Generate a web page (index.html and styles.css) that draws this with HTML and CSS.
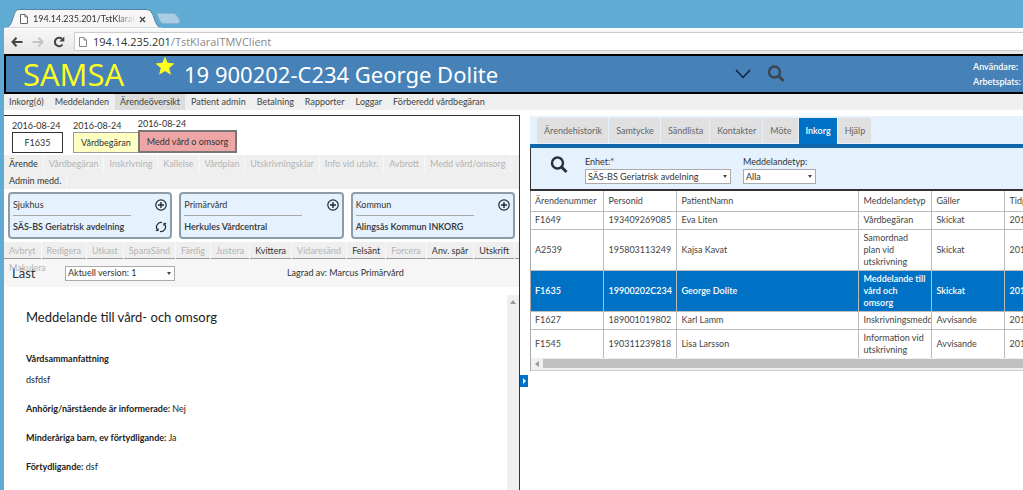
FILE: index.html
```html
<!DOCTYPE html>
<html lang="sv">
<head>
    <meta charset="UTF-8">
    <meta name="viewport" content="width=device-width, initial-scale=1.0">
    <title>SAMSA</title>
    <link rel="stylesheet" href="styles.css">
</head>
<body>
    <div class="browser">
        <div class="tab-strip">
            <svg class="tab-shape" viewBox="0 0 178 19" width="178" height="19">
                <path d="M152 4.500H169Q171 4.500 172 7L175 12Q175 14.500 172 14.500H159Q156 14.500 155 12Z" fill="#a9cde2" stroke="#86b4ce"/>
                <path d="M0 19C5 18 6 15 8 9Q10 .5 14 .5H142Q146 .5 148 6C151 15 152 18 157 19Z" fill="#f6f6f6" stroke="#5585a0"/>
                <path d="M0 18.500H157V19H0Z" fill="#f6f6f6"/>
            </svg>
            <div class="tab">
                <svg class="page-icon" viewBox="0 0 8 10" width="8" height="10"><path d="M.5.5H5L7.500 3V9.500H.5ZM5 .5V3H7.500" fill="#fff" stroke="#666"/></svg>
                <span class="tab-title">194.14.235.201/TstKlaraIT</span>
                <button class="tab-close" aria-label="Stäng flik"><svg viewBox="0 0 7 7" width="7" height="7"><path d="M1 1L6 6M6 1L1 6" stroke="#444" stroke-width="1.300"/></svg></button>
            </div>
        </div>
        <div class="address-bar">
            <button aria-label="Bakåt"><svg viewBox="0 0 12 10" width="12" height="10"><path d="M5.500 .8L1.500 5L5.500 9.200M1.500 5H11.500" fill="none" stroke="#444" stroke-width="2"/></svg></button>
            <button aria-label="Framåt"><svg viewBox="0 0 12 10" width="12" height="10"><path d="M6.500 .8L10.500 5L6.500 9.200M.5 5H10.500" fill="none" stroke="#c4c4c4" stroke-width="2"/></svg></button>
            <button aria-label="Läs om"><svg viewBox="0 0 12 12" width="12" height="12"><path d="M9.500 8.500A4.200 4.200 0 1 1 9 3" fill="none" stroke="#444" stroke-width="2"/><path d="M11.300 .5V5.400H6.400Z" fill="#444"/></svg></button>
            <div class="url">
                <svg class="page-icon" viewBox="0 0 8 10" width="8" height="10"><path d="M.5.5H5L7.500 3V9.500H.5ZM5 .5V3H7.500" fill="#fff" stroke="#888"/></svg>
                <span><b>194.14.235.201</b>/TstKlaraITMVClient</span>
            </div>
        </div>
    </div>

    <div class="page">
        <header class="header">
            <div class="logo">SAMSA</div>
            <svg class="star" viewBox="0 0 20 20" width="20" height="20"><path d="M10 .5L12.600 6.800L19.500 7.400L14.200 11.900L15.900 18.800L10 15.100L4.100 18.800L5.800 11.900L.5 7.400L7.400 6.800Z" fill="#ffff1e"/></svg>
            <h1>19 900202-C234 George Dolite</h1>
            <div class="header-tools">
                <button aria-label="Visa mer"><svg viewBox="0 0 16 10" width="16" height="10"><path d="M1 1L8 8.500L15 1" fill="none" stroke="#10203c" stroke-width="1.500"/></svg></button>
                <button aria-label="Sök patient"><svg viewBox="0 0 18 18" width="18" height="18"><circle cx="7.500" cy="7" r="5.500" fill="none" stroke="#3b4652" stroke-width="2.400"/><path d="M11.500 11L16.500 16" stroke="#3b4652" stroke-width="3"/></svg></button>
            </div>
            <div class="user-info">
                <div>Användare:</div>
                <div>Arbetsplats:</div>
            </div>
        </header>

        <nav class="menu">
            <a href="#">Inkorg(6)</a>
            <a href="#">Meddelanden</a>
            <a href="#" class="active">Ärendeöversikt</a>
            <a href="#">Patient admin</a>
            <a href="#">Betalning</a>
            <a href="#">Rapporter</a>
            <a href="#">Loggar</a>
            <a href="#">Förberedd vårdbegäran</a>
        </nav>

        <div class="columns">
            <section class="case">
                <div class="timeline">
                    <div class="event first"><time>2016-08-24</time><button>F1635</button></div>
                    <div class="event request"><time>2016-08-24</time><button>Vårdbegäran</button></div>
                    <div class="event care"><time>2016-08-24</time><button>Medd vård o omsorg</button></div>
                </div>

                <div class="steps">
                    <button>Ärende</button>
                    <button disabled>Vårdbegäran</button>
                    <button disabled>Inskrivning</button>
                    <button disabled>Kallelse</button>
                    <button disabled>Vårdplan</button>
                    <button disabled>Utskrivningsklar</button>
                    <button disabled>Info vid utskr.</button>
                    <button disabled>Avbrott</button>
                    <button disabled>Medd vård/omsorg</button>
                    <button>Admin medd.</button>
                </div>

                <div class="units">
                    <div class="unit">
                        <div class="unit-text"><div class="unit-type">Sjukhus</div><div class="unit-name">SÄS-BS Geriatrisk avdelning</div></div>
                        <div class="unit-icons">
                            <button aria-label="Lägg till sjukhus"><svg viewBox="0 0 12 12" width="12" height="12"><path d="M6 3V9M3 6H9" stroke="#1c2733" stroke-width="1.400"/><circle cx="6" cy="6" r="5.200" fill="none" stroke="#1c2733" stroke-width="1.200"/></svg></button>
                            <button aria-label="Byt sjukhus"><svg viewBox="0 0 12 12" width="12" height="12"><path d="M7 1.500A4.600 4.600 0 0 0 2.600 9M5 10.500A4.600 4.600 0 0 0 9.400 3" fill="none" stroke="#1c2733" stroke-width="1.200"/><path d="M.8 9.600H3.200V7.400M11.200 2.400H8.800V4.600" fill="none" stroke="#1c2733"/></svg></button>
                        </div>
                    </div>
                    <div class="unit">
                        <div class="unit-text"><div class="unit-type">Primärvård</div><div class="unit-name">Herkules Vårdcentral</div></div>
                        <div class="unit-icons">
                            <button aria-label="Lägg till primärvård"><svg viewBox="0 0 12 12" width="12" height="12"><path d="M6 3V9M3 6H9" stroke="#1c2733" stroke-width="1.400"/><circle cx="6" cy="6" r="5.200" fill="none" stroke="#1c2733" stroke-width="1.200"/></svg></button>
                        </div>
                    </div>
                    <div class="unit">
                        <div class="unit-text"><div class="unit-type">Kommun</div><div class="unit-name">Alingsås Kommun INKORG</div></div>
                        <div class="unit-icons">
                            <button aria-label="Lägg till kommun"><svg viewBox="0 0 12 12" width="12" height="12"><path d="M6 3V9M3 6H9" stroke="#1c2733" stroke-width="1.400"/><circle cx="6" cy="6" r="5.200" fill="none" stroke="#1c2733" stroke-width="1.200"/></svg></button>
                        </div>
                    </div>
                </div>

                <div class="actions">
                    <button disabled>Avbryt</button>
                    <button disabled>Redigera</button>
                    <button disabled>Utkast</button>
                    <button disabled>SparaSänd</button>
                    <button disabled>Färdig</button>
                    <button disabled>Justera</button>
                    <button>Kvittera</button>
                    <button disabled>Vidaresänd</button>
                    <button>Felsänt</button>
                    <button disabled>Forcera</button>
                    <button>Anv. spår</button>
                    <button>Utskrift</button>
                    <button disabled>Makulera</button>
                </div>

                <div class="version-bar">
                    <span class="status">Läst</span>
                    <div class="select version">
                        <select aria-label="Version"><option>Aktuell version: 1</option></select>
                    </div>
                    <span>Lagrad av: Marcus Primärvård</span>
                </div>

                <div class="document">
                    <article>
                        <h2>Meddelande till vård- och omsorg</h2>
                        <h3>Vårdsammanfattning</h3>
                        <p>dsfdsf</p>
                        <p><b>Anhörig/närstående är informerade:</b> Nej</p>
                        <p><b>Minderåriga barn, ev förtydligande:</b> Ja</p>
                        <p><b>Förtydligande:</b> dsf</p>
                    </article>
                    <div class="scroll-v"><svg viewBox="0 0 6 4" width="6" height="4"><path d="M0 4L3 0L6 4Z" fill="#999"/></svg></div>
                </div>
            </section>

            <div class="splitter">
                <button aria-label="Fäll ut"><svg viewBox="0 0 3 6" width="3" height="6"><path d="M0 0L3 3L0 6Z" fill="#fff"/></svg></button>
            </div>

            <section class="inbox">
                <div class="tabs">
                    <button>Ärendehistorik</button>
                    <button>Samtycke</button>
                    <button>Sändlista</button>
                    <button>Kontakter</button>
                    <button>Möte</button>
                    <button class="active">Inkorg</button>
                    <button>Hjälp</button>
                </div>

                <form class="filter">
                    <button type="button" aria-label="Sök"><svg viewBox="0 0 18 18" width="18" height="18"><circle cx="7.500" cy="7" r="5.500" fill="none" stroke="#2b3036" stroke-width="2.400"/><path d="M11.500 11L16.500 16" stroke="#2b3036" stroke-width="3"/></svg></button>
                    <div class="field unit-field">
                        <label for="enhet">Enhet:*</label>
                        <div class="select"><select id="enhet"><option>SÄS-BS Geriatrisk avdelning</option></select></div>
                    </div>
                    <div class="field type-field">
                        <label for="typ">Meddelandetyp:</label>
                        <div class="select"><select id="typ"><option>Alla</option></select></div>
                    </div>
                </form>

                <div class="grid">
                    <table>
                        <colgroup><col><col><col class="wide"><col><col><col></colgroup>
                        <thead>
                            <tr><th>Ärendenummer</th><th>Personid</th><th>PatientNamn</th><th>Meddelandetyp</th><th>Gäller</th><th>Tidp</th></tr>
                        </thead>
                        <tbody>
                            <tr><td>F1649</td><td>193409269085</td><td>Eva Liten</td><td>Vårdbegäran</td><td>Skickat</td><td>201</td></tr>
                            <tr><td>A2539</td><td>195803113249</td><td>Kajsa Kavat</td><td>Samordnad plan vid utskrivning</td><td>Skickat</td><td>201</td></tr>
                            <tr class="selected"><td>F1635</td><td>19900202C234</td><td>George Dolite</td><td>Meddelande till vård och omsorg</td><td>Skickat</td><td>201</td></tr>
                            <tr><td>F1627</td><td>189001019802</td><td>Karl Lamm</td><td>Inskrivningsmedd</td><td>Avvisande</td><td>201</td></tr>
                            <tr><td>F1545</td><td>190311239818</td><td>Lisa Larsson</td><td>Information vid utskrivning</td><td>Avvisande</td><td>201</td></tr>
                        </tbody>
                    </table>
                    <div class="scroll-h">
                        <svg viewBox="0 0 4 6" width="4" height="6"><path d="M4 0L0 3L4 6Z" fill="#999"/></svg>
                        <div class="thumb"></div>
                    </div>
                </div>
            </section>
        </div>
    </div>
</body>
</html>
```
FILE: styles.css
```css
:root {
    --sky: #60abd3;
    --header-blue: #4682b7;
    --accent: #0072c6;
    --pale-blue: #e5f1fd;
    --bar-gray: #efefef;
    --line-gray: #aaa;
    --text-color: #333;
}

* {
    margin: 0;
    padding: 0;
    box-sizing: border-box;
}

body {
    display: flex;
    flex-direction: column;
    height: 100vh;
    padding-left: 4px;
    overflow: hidden;
    background: var(--sky);
    color: var(--text-color);
    font-family: Lato, "Open Sans", sans-serif;
    font-size: 9px;
    line-height: 12px;
}

button,
select {
    font: inherit;
    color: inherit;
    background: none;
    border: none;
}

svg {
    display: block;
}

/* browser chrome */
.tab-strip {
    position: relative;
    height: 28px;
    padding: 10px 0 0 16px;
}

.tab-shape {
    position: absolute;
    left: 1px;
    bottom: 0;
}

.tab {
    position: relative;
    display: flex;
    align-items: center;
    width: 126px;
    height: 18px;
}

.tab-title {
    flex: 1;
    margin: 0 3px 0 5px;
    overflow: hidden;
    white-space: nowrap;
    -webkit-mask-image: linear-gradient(to right, #000 80%, transparent);
    mask-image: linear-gradient(to right, #000 80%, transparent);
}

.address-bar {
    display: flex;
    align-items: center;
    gap: 9px;
    height: 26px;
    padding-left: 7px;
    background: linear-gradient(#f8f8f8, #e6e6e6);
    border-top: 1px solid #fff;
}

.url {
    flex: 1;
    display: flex;
    align-items: center;
    gap: 6px;
    height: 19px;
    padding-left: 4px;
    background: #fff;
    border: 1px solid #ccc;
    border-right: none;
    color: #888;
    font-family: "Open Sans", sans-serif;
    font-size: 11px;
}

.url b {
    color: #333;
    font-weight: normal;
}

/* application */
.page {
    flex: 1;
    display: flex;
    flex-direction: column;
    min-height: 0;
    background: #fff;
}

.header {
    display: flex;
    align-items: center;
    height: 40px;
    padding-left: 17px;
    background: var(--header-blue);
    border: 2px solid #000;
    border-right: none;
    color: #fff;
}

.logo {
    width: 132px;
    color: #ffff1e;
    font-family: "Open Sans", sans-serif;
    font-size: 31px;
    line-height: 36px;
}

.star {
    align-self: flex-start;
}

.header h1 {
    flex: 1;
    margin-left: 9px;
    font-family: "Noto Sans", sans-serif;
    font-size: 22px;
    font-weight: normal;
    line-height: 32px;
    white-space: nowrap;
}

.header-tools {
    display: flex;
    align-items: center;
    gap: 16px;
    margin-right: 188px;
}

.user-info {
    width: 50px;
    line-height: 15px;
    font-weight: 600;
}

.menu {
    display: flex;
    gap: 1px;
    height: 16px;
    background: var(--bar-gray);
}

.menu a {
    padding: 2px 5px;
    color: #444;
    text-decoration: none;
    white-space: nowrap;
}

.menu .active {
    background: #dcdcdc;
}

.columns {
    flex: 1;
    display: grid;
    grid-template-columns: minmax(0, 516fr) 10px minmax(0, 493fr);
    min-height: 0;
    padding-top: 5px;
}

.case {
    display: flex;
    flex-direction: column;
    min-height: 0;
    border-top: 1px solid #333;
    border-right: 1px solid #333;
}

.timeline {
    display: flex;
    align-items: flex-end;
    padding: 2px 8px;
}

.event time {
    display: block;
}

.event button {
    display: block;
    height: 21px;
    padding: 0 7px;
    border: 1px solid #333;
}

.first {
    margin-right: 10px;
}

.first button {
    width: 51px;
}

.request button {
    background: #ffffc4;
    border-color: #999;
    border-right: none;
}

.care button {
    height: 23px;
    background: #eda5a5;
    border: 2px solid #777;
}

.steps {
    display: flex;
    flex-wrap: wrap;
    background: var(--bar-gray);
}

.steps button,
.actions button {
    height: 17px;
    padding: 0 5px;
    border-right: 1px solid #f8f8f8;
    white-space: nowrap;
}

.steps button:disabled,
.actions button:disabled {
    color: #b4b4b4;
}

.units {
    display: grid;
    grid-template-columns: repeat(3, 1fr);
    gap: 7px;
    padding: 3px 4px;
}

.unit {
    display: flex;
    justify-content: space-between;
    height: 47px;
    padding: 5px 3px;
    background: var(--pale-blue);
    border: 2px solid #8d9da8;
    border-radius: 4px;
}

.unit-text {
    width: 118px;
    white-space: nowrap;
}

.unit-type {
    padding-bottom: 4px;
    border-bottom: 1px solid var(--line-gray);
}

.unit-name {
    padding-top: 5px;
    font-weight: 600;
}

.unit-icons {
    display: flex;
    flex-direction: column;
    gap: 10px;
}

/* buttons that do not fit wrap down over the version bar */
.actions {
    position: relative;
    z-index: 1;
    display: flex;
    flex-wrap: wrap;
    height: 17px;
    background: var(--bar-gray);
    border-bottom: 1px solid #999;
}

.version-bar {
    display: flex;
    align-items: center;
    height: 28px;
    padding-left: 8px;
    background: #f6f6f6;
}

.status {
    width: 53px;
    font-size: 13px;
}

.select {
    position: relative;
    background: #fff;
    border: 1px solid var(--line-gray);
}

.select::after {
    content: "";
    position: absolute;
    top: 5px;
    right: 3px;
    border: 2px solid transparent;
    border-top: 3px solid #444;
    pointer-events: none;
}

.select select {
    display: block;
    width: 100%;
    height: 13px;
    padding-left: 2px;
    appearance: none;
    outline: none;
}

.version {
    width: 110px;
    margin-right: 112px;
}

.document {
    flex: 1;
    display: flex;
    justify-content: space-between;
    min-height: 0;
    padding-top: 8px;
}

article {
    padding: 12px 22px;
    color: #222;
}

article h2 {
    margin-bottom: 26px;
    font-size: 13px;
    font-weight: normal;
    line-height: 20px;
}

article h3 {
    margin-bottom: 9px;
    font-size: 9px;
}

article p {
    margin-bottom: 17px;
}

.scroll-v {
    width: 12px;
    padding: 5px 3px;
    background: #f0f0f0;
}

.splitter button {
    display: flex;
    align-items: center;
    justify-content: center;
    width: 8px;
    height: 12px;
    margin-top: 260px;
    background: var(--accent);
}

.tabs {
    display: flex;
    align-items: flex-start;
    gap: 1px;
    height: 32px;
    margin-top: 1px;
    padding: 2px 0 0 7px;
    background: var(--pale-blue);
    border-bottom: 4px solid #0f68ae;
}

.tabs button {
    height: 25px;
    padding: 0 6px 0 7px;
    background: #e0e0e0;
    color: #666;
}

.tabs .active {
    height: 26px;
    background: var(--accent);
    color: #fff;
    font-weight: 600;
}

.filter {
    display: flex;
    align-items: flex-start;
    height: 43px;
    padding: 8px 0 0 19px;
    background: var(--pale-blue);
    border-left: 1px solid #333;
    border-bottom: 2px solid #333;
}

.filter button {
    margin-right: 17px;
}

.field label {
    display: block;
    margin-bottom: 1px;
}

.unit-field {
    width: 146px;
    margin-right: 12px;
}

.type-field {
    width: 73px;
}

.grid {
    overflow: hidden;
    border-left: 1px solid var(--line-gray);
    border-bottom: 1px solid #ccc;
}

table {
    width: 546px;
    margin-left: -1px;
    table-layout: fixed;
    border-collapse: collapse;
}

col {
    width: 73px;
}

.wide {
    width: 182px;
}

th,
td {
    height: 18px;
    padding: 2px 5px;
    border-right: 1px solid #bbb;
    border-bottom: 1px solid #bbb;
    overflow: hidden;
    font-weight: normal;
    text-align: left;
    color: #444;
}

th {
    height: 20px;
}

tbody tr:last-child td {
    border-bottom: none;
}

.selected td {
    background: var(--accent);
    color: #fff;
    font-weight: 600;
}

.scroll-h {
    display: flex;
    align-items: center;
    gap: 4px;
    height: 12px;
    padding-left: 4px;
    background: #f0f0f0;
}

.thumb {
    flex: 1;
    height: 9px;
    background: #c0c0c0;
}
```
